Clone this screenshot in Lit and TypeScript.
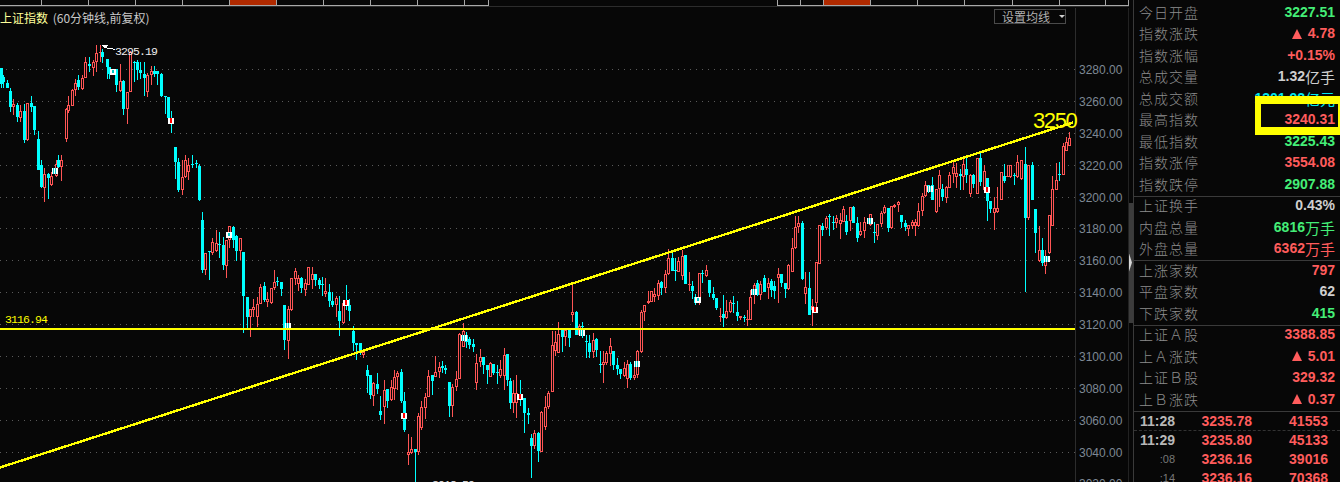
import { LitElement, html, css, svg } from "lit";
import { customElement } from "lit/decorators.js";

// x kind bodyTop bodyBottom wickTop wickBottom
const DATA = `1 c 68 84 68 88|3 c 77 82 75 88|7 c 83 88 80 88|10 c 91 107 88 112|13 r 104 107 99 115|17 c 105 117 103 122|20 r 111 118 105 122|24 c 111 140 104 143|27 r 103 140 103 141|31 c 103 107 96 112|34 c 106 130 106 135|38 c 139 170 131 170|
41 c 165 187 160 188|44 r 174 188 168 202|48 c 174 178 173 199|51 r 176 185 172 186|55 r 168 174 166 176|56 r 164 176 160 177|58 c 160 167 155 168|61 r 160 167 155 181|
66 r 109 139 108 142|68 r 105 111 96 113|72 r 90 106 89 106|75 r 83 90 79 96|78 c 80 87 75 90|82 r 78 89 75 90|85 r 62 78 57 78|89 c 64 66 57 72|93 r 62 68 60 76|96 r 53 62 45 72|100 r 52 53 45 62|102 c 52 57 49 63|107 c 59 67 59 79|109 c 67 74 67 79|116 c 69 85 69 92|120 r 81 91 64 92|123 c 81 109 80 115|127 r 92 109 92 124|130 r 52 92 51 92|134 c 62 63 61 82|137 c 62 70 60 80|140 c 70 73 62 79|144 c 74 78 62 96|147 r 75 92 73 97|151 r 71 75 66 85|154 c 71 74 66 77|157 c 71 74 72 85|161 c 74 96 73 97|165 c 96 97 96 114|168 c 97 118 97 120|171 c 119 123 111 133|
175 c 147 162 147 179|178 c 162 190 158 192|182 r 177 190 160 195|185 r 160 177 155 178|188 r 165 172 158 180|192 c 164 165 155 168|196 c 163 164 160 168|199 c 166 200 164 201|
202 c 220 270 212 273|205 r 253 270 253 275|209 c 251 252 251 280|212 r 242 253 238 255|216 r 243 251 230 252|219 c 244 245 232 258|223 c 245 265 237 270|226 r 240 266 240 278|229 r 226 240 226 248|233 c 227 240 226 248|236 c 236 251 235 261|240 r 238 251 238 260|243 c 252 296 252 333|247 c 297 317 297 328|250 r 309 317 309 337|253 r 307 310 299 317|257 r 304 317 297 327|260 r 287 304 284 304|264 c 286 300 282 302|267 r 299 302 292 307|271 r 288 303 288 304|274 r 282 288 270 290|277 c 281 282 277 286|281 c 282 289 282 296|284 c 305 340 305 350|288 r 309 341 306 359|291 r 278 310 278 311|295 r 271 279 268 285|298 r 278 284 275 291|301 c 278 288 277 293|305 r 283 290 279 296|308 r 267 285 267 285|312 r 274 280 267 289|315 c 274 280 274 286|319 c 280 285 278 289|322 c 284 285 277 296|325 r 291 294 278 297|329 c 292 301 284 307|332 c 301 305 292 307|336 r 298 305 296 317|339 c 311 321 296 336|343 r 303 323 300 324|346 c 300 306 285 310|349 c 305 311 299 321|
353 c 331 343 326 351|356 c 343 345 343 360|360 c 343 351 343 355|363 r 352 355 351 358|367 c 370 376 365 393|370 c 375 395 375 399|373 r 383 396 382 406|377 c 384 389 373 394|380 c 411 415 396 420|384 r 390 407 380 424|387 c 389 401 389 408|391 r 387 400 380 401|394 r 377 389 370 400|397 r 373 377 371 390|401 c 372 401 369 403|404 c 401 430 392 432|408 r 452 455 434 465|411 r 449 453 437 454|415 c 449 452 449 482|418 r 416 452 413 455|421 r 407 428 401 430|425 r 397 408 393 419|428 r 376 397 370 397|432 c 375 381 375 395|435 r 372 377 356 377|439 r 367 372 362 378|442 c 366 368 361 373|445 c 368 370 365 374|449 c 382 406 382 417|452 r 387 406 384 417|456 r 379 387 371 391|459 r 334 379 333 379|463 r 331 347 323 347|466 c 335 342 332 348|469 c 339 345 337 349|473 c 344 347 339 352|476 r 363 383 354 390|480 r 357 362 349 367|483 c 357 365 357 374|487 c 365 370 365 384|490 r 363 377 362 377|493 c 364 373 364 375|497 c 372 373 365 384|500 r 369 376 360 378|504 r 355 376 348 390|507 c 354 380 354 386|510 c 381 403 378 409|513 r 393 403 380 413|516 r 393 403 375 418|520 c 394 400 380 406|524 c 398 413 398 433|528 c 413 415 408 424|531 c 438 446 434 478|534 r 433 446 430 449|538 c 433 451 432 462|541 r 412 452 411 452|545 r 407 427 396 430|548 r 393 407 391 409|552 r 345 392 331 392|555 r 342 351 331 356|558 r 334 353 322 353|562 c 330 337 330 352|565 r 330 337 330 346|569 c 330 338 328 347|572 r 312 315 285 322|576 c 312 335 311 335|579 r 326 335 324 336|582 c 326 327 322 338|586 c 341 342 335 358|589 c 343 352 335 358|593 r 340 352 333 358|596 c 339 350 338 357|600 c 364 365 351 373|603 r 362 365 351 383|606 r 353 363 351 365|610 r 346 354 338 366|613 c 351 365 351 370|617 c 365 369 358 375|620 c 369 374 369 379|624 r 368 376 362 377|627 r 364 379 360 388|630 c 364 378 362 380|634 r 375 378 363 380|637 r 351 375 350 378|641 r 312 352 310 353|644 r 305 312 305 321|648 r 301 303 291 304|651 r 291 302 291 302|654 r 294 297 288 302|658 r 283 296 280 300|661 c 282 288 281 295|
665 r 274 288 270 293|668 r 258 274 249 275|672 c 258 271 252 271|675 c 270 271 258 281|678 r 261 272 257 272|682 r 256 276 250 280|685 c 255 284 255 284|689 r 284 285 272 291|692 c 286 291 281 299|695 c 297 303 294 305|699 r 273 299 273 305|702 c 273 274 270 283|706 r 270 276 265 277|709 c 280 293 280 297|713 c 294 298 287 300|716 c 298 308 298 310|720 r 316 317 308 322|723 c 314 318 295 327|726 r 311 318 300 319|730 r 302 312 300 313|733 c 303 304 296 313|737 c 312 316 301 321|740 r 316 318 316 320|744 c 317 318 315 322|747 r 319 320 310 326|750 r 297 320 290 320|754 r 285 295 283 304|757 c 283 295 280 296|760 r 284 295 281 300|764 c 278 292 275 292|768 r 283 288 278 299|771 c 281 290 279 297|774 c 286 291 281 299|778 r 274 278 268 303|781 c 274 283 274 287|785 c 283 289 283 298|788 r 265 289 264 290|792 r 248 272 238 272|795 r 227 248 216 249|798 r 223 227 216 233|802 c 223 279 221 280|805 r 287 294 272 304|809 c 288 315 272 315|812 r 306 310 299 326|816 r 262 303 262 308|819 r 225 264 225 264|822 c 226 230 223 236|826 r 218 228 216 230|829 c 216 217 214 236|833 c 222 223 216 230|836 r 218 223 215 228|840 r 220 224 213 239|843 r 209 222 206 222|846 c 221 232 215 235|850 r 207 221 207 231|853 c 207 223 206 223|857 c 223 238 217 242|860 r 231 235 222 236|
864 r 222 231 217 238|870 r 214 225 214 226|874 c 232 233 222 243|877 r 224 236 224 240|881 r 213 224 211 227|884 r 207 213 205 214|888 c 208 228 208 232|891 r 206 228 206 229|894 r 205 207 204 208|898 r 202 205 201 212|901 c 215 222 215 228|905 c 223 227 220 231|908 r 225 229 225 236|912 r 222 226 220 229|915 r 222 226 219 236|918 r 211 226 203 227|922 r 196 211 193 216|925 r 185 196 181 197|928 c 185 191 185 193|932 c 185 200 177 200|936 r 189 212 189 213|939 r 175 189 170 207|942 c 189 197 184 201|946 r 187 198 186 203|949 r 175 188 172 188|953 r 167 174 160 183|956 r 173 177 163 188|960 c 174 176 169 190|963 r 164 177 158 190|966 c 169 175 158 183|970 r 175 194 174 197|973 c 175 184 174 188|977 r 158 194 158 194|980 c 158 182 153 186|984 r 171 190 165 191|987 c 178 201 178 221|990 c 201 209 201 213|994 r 208 213 197 230|997 r 208 212 187 213|1001 r 172 200 172 200|1004 c 176 181 164 183|1007 r 176 177 165 177|1010 r 165 177 165 178|1014 c 175 176 173 185|1017 r 162 177 155 178|1021 r 160 179 160 180|1025 c 164 218 147 292|1028 r 165 218 165 220|1032 c 165 200 162 200|1035 c 209 233 209 253|1039 r 250 261 226 262|1042 c 250 263 238 266|1045 r 256 266 250 274|1049 r 215 253 215 254|1052 r 189 226 176 226|1056 r 180 190 163 190|1059 c 174 175 162 181|1063 r 146 175 143 175|1066 r 142 151 137 151|1069 r 138 146 132 146`;

type Candle = { x: number; up: boolean; t: number; b: number; wt: number; wb: number };
const CANDLES: Candle[] = DATA.split("|").map((s) => {
  const p = s.trim().split(" ");
  return { x: +p[0], up: p[1] === "r", t: +p[2], b: +p[3], wt: +p[4], wb: +p[5] };
});

// signal markers: x, y, style
const MARKS: [number, number, string][] = [
  [110, 69, "c"], [52, 168, "s"], [226, 232, "c"], [285, 323, "s"], [343, 300, "r"], [168, 118, "r"],
  [401, 413, "r"], [461, 335, "s"], [517, 394, "r"], [579, 330, "s"], [634, 361, "s"], [695, 297, "c"],
  [751, 289, "s"], [812, 307, "r"], [867, 218, "s"], [927, 186, "s"], [984, 187, "r"], [1044, 256, "s"],
];

const GRID = [69, 101, 133, 165, 197, 228, 260, 292, 324, 356, 388, 420, 452];
const PRICES = ["3280", "3260", "3240", "3220", "3200", "3180", "3160", "3140", "3120", "3100", "3080", "3060", "3040", "3020"];

type Row = { label: string; value: string; unit?: string; tone: string; up?: boolean };
const GROUPS: Row[][] = [
  [
    { label: "今日开盘", value: "3227.51", tone: "g" },
    { label: "指数涨跌", value: "4.78", tone: "r", up: true },
    { label: "指数涨幅", value: "+0.15%", tone: "r" },
    { label: "总成交量", value: "1.32", unit: "亿手", tone: "w" },
    { label: "总成交额", value: "1301.92", unit: "亿元", tone: "c" },
    { label: "最高指数", value: "3240.31", tone: "r" },
    { label: "最低指数", value: "3225.43", tone: "g" },
    { label: "指数涨停", value: "3554.08", tone: "r" },
    { label: "指数跌停", value: "2907.88", tone: "g" },
  ],
  [
    { label: "上证换手", value: "0.43%", tone: "w" },
    { label: "内盘总量", value: "6816", unit: "万手", tone: "g" },
    { label: "外盘总量", value: "6362", unit: "万手", tone: "r" },
  ],
  [
    { label: "上涨家数", value: "797", tone: "r" },
    { label: "平盘家数", value: "62", tone: "w" },
    { label: "下跌家数", value: "415", tone: "g" },
  ],
  [
    { label: "上证Ａ股", value: "3388.85", tone: "r" },
    { label: "上Ａ涨跌", value: "5.01", tone: "r", up: true },
    { label: "上证Ｂ股", value: "329.32", tone: "r" },
    { label: "上Ｂ涨跌", value: "0.37", tone: "r", up: true },
  ],
];

const TICKS: [string, string, string, boolean][] = [
  ["11:28", "3235.78", "41553", true],
  ["11:29", "3235.80", "45133", true],
  [":08", "3236.16", "39016", false],
  [":14", "3236.16", "70368", false],
];

const LEFT_TABS = [42, 47, 47, 47, 47, 47, 47, 47, 47, 47, 24];
const RIGHT_TABS = [23, 23, 47, 47, 47, 48, 47, 46, 23];

@customElement("app-root")
export class AppRoot extends LitElement {
  static styles = css`
    :host {
      display: block;
      width: 1340px;
      height: 482px;
      overflow: hidden;
      background: #070707;
      font-family: "Liberation Sans", "Noto Sans CJK SC", sans-serif;
    }
    .frame { display: flex; height: 482px; }
    .main { position: relative; width: 1129px; flex: none; }
    .tabs { display: flex; justify-content: space-between; height: 5px; border: 0; }
    .tabgroup { display: flex; height: 5px; border-bottom: 1px solid #a8a8a8; }
    .tabgroup.right { border-left: 1px solid #a8a8a8; }
    .tab { box-sizing: border-box; height: 5px; border-right: 1px solid #a8a8a8; }
    .tab.on { background: #b02a00; }
    .rule { height: 1px; margin-top: 1px; background: #2c2c2c; }
    .chart { display: block; width: 1129px; height: 475px; }
    .title { position: absolute; left: 0; top: 10px; font: 12px/16px "Noto Sans CJK SC", sans-serif; color: #c9c9c9; white-space: pre; }
    .title b { font-weight: 400; color: #ffff9a; margin-right: 2px; }
    .setma {
      position: absolute; left: 994px; top: 9px; box-sizing: border-box; width: 72px; height: 15px;
      border: 1px solid #4a4a4a; color: #b0b0b0; font: 12px/13px "Noto Sans CJK SC", sans-serif;
      padding-left: 7px; display: flex; align-items: center; gap: 9px;
    }
    .setma i { width: 0; height: 0; border: 3px solid transparent; border-top: 3px solid #d0d0d0; border-bottom: 0; }
    .sep { width: 5px; flex: none; box-sizing: border-box; border-right: 1px solid #3a3a3a; }
    .bar { margin-top: 203px; height: 120px; background: #3c3c3c; display: flex; align-items: center; }
    .bar i { width: 3px; height: 18px; margin-top: -1px; background: #d8d8d8; clip-path: polygon(0 0, 100% 50%, 0 100%); }
    .panel { position: relative; flex: 1; min-width: 0; padding-top: 1.25px; }
    .group { padding: 0 5px 1px 5px; margin-bottom: -2px; border-bottom: 1px solid #3a3a3a; }
    .row { display: flex; justify-content: space-between; align-items: center; height: 21.5px; white-space: nowrap; }
    .label { font: 300 14px/21px "Noto Sans CJK SC", sans-serif; letter-spacing: 1px; color: #8c8c8c; }
    .value { font: 700 14px/21px "Liberation Sans", sans-serif; display: flex; align-items: center; }
    .unit { font: 400 15px/21px "Noto Sans CJK SC", sans-serif; }
    .tri { width: 0; height: 0; border: 5.5px solid transparent; border-bottom: 10px solid currentColor; border-top: 0; margin-right: 6px; }
    .g { color: #44ee77; }
    .r { color: #ff5c5c; }
    .w { color: #cfcfcf; }
    .c { color: #00e8f0; }
    .ticks { padding-top: 2px; }
    .tick { display: grid; grid-template-columns: 36px 77px 76px; height: 19px; align-items: center; padding-left: 5px; font: 700 14px/19px "Liberation Sans", sans-serif; }
    .tick.first { box-sizing: border-box; border-bottom: 1px dashed #333; }
    .tick span { text-align: right; color: #ff5c5c; }
    .tick .time { color: #b8b8b8; }
    .tick .time.sub { font-weight: 400; font-size: 11px; color: #777; }
    .box { position: absolute; left: 121px; top: 96px; right: 0; height: 39px; box-sizing: border-box; border: solid #ffff00; border-width: 8px 2px 8px 6px; }
  `;

  private candle(c: Candle) {
    const col = c.up ? "#ff5555" : "#00ffff";
    const h = Math.max(1, c.b - c.t);
    return svg`
      <rect x=${c.x} y=${c.wt} width="1" height=${Math.max(1, c.wb - c.wt)} fill=${col}></rect>
      <rect x=${c.x - 1} y=${c.t} width="3" height=${h} fill=${col}></rect>
      ${c.up && h > 2 ? svg`<rect x=${c.x} y=${c.t + 1} width="1" height=${h - 2} fill="#070707"></rect>` : ""}`;
  }

  private mark(m: [number, number, string]) {
    const [x, y, k] = m;
    return svg`
      <rect x=${x} y=${y} width="6" height="6" fill="#ffffff"></rect>
      ${k === "r" ? svg`<rect x=${x + 2} y=${y} width="2" height="5" fill="#ff0000"></rect>` : ""}
      ${k === "c" ? svg`<rect x=${x + 2} y=${y + 1} width="2" height="3" fill="#00c8c8"></rect>` : ""}
      ${k === "s" ? svg`<rect x=${x + 1} y=${y} width="1" height="6" fill="#00c8c8"></rect><rect x=${x + 3} y=${y} width="1" height="6" fill="#00c8c8"></rect>` : ""}`;
  }

  private chart() {
    return svg`
      <g shape-rendering="crispEdges">
        ${GRID.map((y) => svg`<line x1="0" y1=${y + 0.5} x2="1075" y2=${y + 0.5} stroke="#5a5a5a" stroke-dasharray="1 5"></line>`)}
        <rect x="1075" y="8" width="1" height="474" fill="#2c2c2c"></rect>
        <rect x="1128" y="8" width="1" height="474" fill="#222"></rect>
        ${CANDLES.map((c) => this.candle(c))}
        ${MARKS.map((m) => this.mark(m))}
        <line x1="0" y1="467.5" x2="1073" y2="122.5" stroke="#ffff00" stroke-width="2.4"></line>
        <rect x="0" y="328" width="1075" height="2" fill="#ffff00"></rect>
        <path d="M101 45h7l-3 3z" fill="#fff"></path>
        <path d="M105 47l4 2 2 -1 4 2" fill="none" stroke="#fff"></path>
      </g>
      <text x="115" y="55" fill="#eeeeee" font-family="Liberation Mono" font-size="11.5" letter-spacing="-0.9">3295.19</text>
      <text x="432" y="488" fill="#eeeeee" font-family="Liberation Mono" font-size="11.5" letter-spacing="-0.9">3018.59</text>
      <text x="5" y="323" fill="#ffff00" font-family="Liberation Mono" font-size="11.5" letter-spacing="-0.9">3116.94</text>
      <text x="1033" y="128" fill="#ffff00" font-family="Liberation Sans" font-size="22" letter-spacing="-1.4">3250</text>
      ${PRICES.map((p, i) => svg`<text x="1079" y=${i === 13 ? 488 : GRID[i] + 5} fill="#7e8894" font-family="Liberation Sans" font-size="12">${p}.00</text>`)}`;
  }

  render() {
    return html`
      <div class="frame">
        <div class="main">
          <div class="tabs">
            <div class="tabgroup">
              ${LEFT_TABS.map((w, i) => html`<div class="tab ${i === 5 ? "on" : ""}" style="width:${w}px"></div>`)}
            </div>
            <div class="tabgroup right">
              ${RIGHT_TABS.map((w, i) => html`<div class="tab ${i === 2 ? "on" : ""}" style="width:${w}px"></div>`)}
            </div>
          </div>
          <div class="rule"></div>
          <svg class="chart" viewBox="0 7 1129 475">${this.chart()}</svg>
          <div class="title"><b>上证指数</b> (60分钟线,前复权)</div>
          <div class="setma">设置均线<i></i></div>
        </div>
        <div class="sep"><div class="bar"><i></i></div></div>
        <div class="panel">
          ${GROUPS.map(
            (g) => html`<div class="group">
              ${g.map(
                (r) => html`<div class="row">
                  <span class="label">${r.label}</span>
                  <span class="value ${r.tone}">
                    ${r.up ? html`<i class="tri"></i>` : ""}${r.value}${r.unit ? html`<span class="unit">${r.unit}</span>` : ""}
                  </span>
                </div>`
              )}
            </div>`
          )}
          <div class="ticks">
            ${TICKS.map(
              (t, i) => html`<div class="tick ${i === 0 ? "first" : ""}">
                <span class="time ${t[3] ? "" : "sub"}">${t[0]}</span><span>${t[1]}</span><span>${t[2]}</span>
              </div>`
            )}
          </div>
          <div class="box"></div>
        </div>
      </div>
    `;
  }
}
